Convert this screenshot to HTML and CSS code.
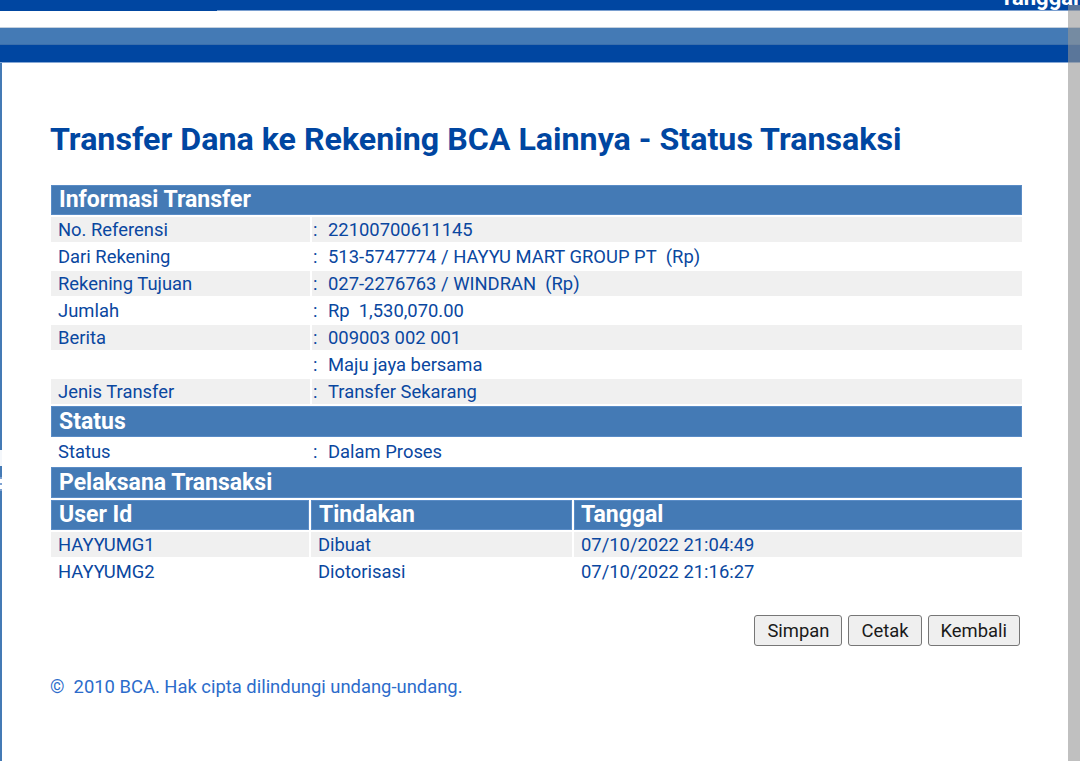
FILE: index.html
```html
<!DOCTYPE html>
<html lang="id">
<head>
<meta charset="utf-8">
<title>Transfer Dana ke Rekening BCA Lainnya - Status Transaksi</title>
<link rel="stylesheet" href="styles.css">
</head>
<body>
<div class="top">
  <div class="top-dark"><span class="top-text">Tanggal</span></div>
  <div class="top-line"><span class="top-line-left"></span><span class="top-line-right"></span></div>
  <div class="top-white"></div>
  <div class="top-sep"></div>
  <div class="top-mid"></div>
  <div class="top-navy"></div>
  <div class="top-edge"></div>
</div>
<div class="frame">
  <div class="edge">
    <div class="seg seg-a"></div>
    <div class="seg seg-gap"></div>
    <div class="seg seg-b"></div>
    <div class="seg seg-marks"><i></i><i></i><i></i></div>
    <div class="seg seg-c"></div>
  </div>
  <div class="main">
    <h1 class="title">Transfer Dana ke Rekening BCA Lainnya - Status Transaksi</h1>
    <div class="panel">
      <div class="hdr h30">Informasi Transfer</div>
      <div class="row gray"><div class="lab">No. Referensi</div><div class="val"><span class="colon">:</span>22100700611145</div></div>
      <div class="row"><div class="lab">Dari Rekening</div><div class="val"><span class="colon">:</span>513-5747774 / HAYYU MART GROUP PT&nbsp; (Rp)</div></div>
      <div class="row gray"><div class="lab">Rekening Tujuan</div><div class="val"><span class="colon">:</span>027-2276763 / WINDRAN&nbsp; (Rp)</div></div>
      <div class="row"><div class="lab">Jumlah</div><div class="val"><span class="colon">:</span>Rp&nbsp; 1,530,070.00</div></div>
      <div class="row gray"><div class="lab">Berita</div><div class="val"><span class="colon">:</span>009003 002 001</div></div>
      <div class="row"><div class="lab"></div><div class="val"><span class="colon">:</span>Maju jaya bersama</div></div>
      <div class="row gray"><div class="lab">Jenis Transfer</div><div class="val"><span class="colon">:</span>Transfer Sekarang</div></div>
      <div class="hdr h31">Status</div>
      <div class="row"><div class="lab">Status</div><div class="val"><span class="colon">:</span>Dalam Proses</div></div>
      <div class="hdr h31 mt1">Pelaksana Transaksi</div>
      <div class="urow uhead"><div class="c1">User Id</div><div class="c2">Tindakan</div><div class="c3">Tanggal</div></div>
      <div class="urow gray"><div class="c1">HAYYUMG1</div><div class="c2">Dibuat</div><div class="c3">07/10/2022 21:04:49</div></div>
      <div class="urow"><div class="c1">HAYYUMG2</div><div class="c2">Diotorisasi</div><div class="c3">07/10/2022 21:16:27</div></div>
    </div>
    <div class="actions">
      <button class="btn" type="button">Simpan</button>
      <button class="btn" type="button">Cetak</button>
      <button class="btn" type="button">Kembali</button>
    </div>
    <p class="footer">&copy;&nbsp; 2010 BCA. Hak cipta dilindungi undang-undang.</p>
  </div>
</div>
<div class="scrollbar"></div>
</body>
</html>
```

FILE: styles.css
```css
html, body {
  margin: 0;
  padding: 0;
  background: #ffffff;
  height: 761px;
  overflow: hidden;
}
body {
  font-family: Roboto, "Liberation Sans", Arial, sans-serif;
  color: #0a47a0;
}

/* top bars */
.top { width: 100%; }
.top-dark {
  height: 10px;
  background: #0046a1;
  overflow: hidden;
}
.top-text {
  display: block;
  margin-top: -13px;
  padding-left: 1000px;
  line-height: 22px;
  font-size: 22px;
  font-weight: 700;
  color: #ffffff;
  white-space: nowrap;
}
.top-line { display: flex; height: 1px; }
.top-line-left { width: 217px; background: #0046a1; }
.top-line-right { flex: 1; background: #7a9fd0; }
.top-white { height: 16px; background: #ffffff; }
.top-sep { height: 1px; background: #c3d0de; }
.top-mid { height: 16px; background: #447ab5; border-bottom: 1px solid #3b6fac; }
.top-navy { height: 17px; background: #0046a1; }
.top-edge { height: 1px; background: #86a8d6; }

/* frame */
.frame { display: flex; }
.edge {
  width: 2px;
  display: flex;
  flex-direction: column;
  height: 698px;
}
.seg-a { height: 387px; background: #447ab5; }
.seg-gap { height: 16px; background: #f4f7fb; }
.seg-b { height: 11px; background: #447ab5; }
.seg-marks {
  height: 14px;
  display: flex;
  flex-direction: column;
  justify-content: space-between;
  background: #ffffff;
}
.seg-marks i { display: block; height: 2px; background: #7ea2d2; }
.seg-c { flex: 1; background: #447ab5; }

.main { flex: 1; }

.title {
  margin: 57px 0 0 48px;
  font-size: 32.2px;
  line-height: 38px;
  font-weight: 700;
  color: #0046a1;
  white-space: nowrap;
}

.panel {
  margin: 27px 0 0 49px;
  width: 971px;
  display: flex;
  flex-direction: column;
  gap: 2px;
}
.hdr {
  background: #447ab5;
  box-shadow: inset 0 0 0 1px #5a8cc6;
  color: #ffffff;
  font-weight: 700;
  font-size: 23px;
  padding-left: 8px;
  white-space: nowrap;
}
.h30 { height: 30px; line-height: 30px; }
.h31 { height: 31px; line-height: 31px; }
.mt1 { margin-top: 1px; }

.row {
  display: grid;
  grid-template-columns: 259px 1fr;
  column-gap: 2px;
  height: 25px;
  line-height: 25px;
  font-size: 18.4px;
  white-space: nowrap;
}
.row .lab { padding-left: 7px; }
.row .val { padding-left: 1px; }
.row.gray .lab, .row.gray .val { background: #f0f0f0; }
.colon { display: inline-block; width: 15px; }

.urow {
  display: grid;
  grid-template-columns: 258px 261px 1fr;
  column-gap: 2px;
  height: 25px;
  line-height: 25px;
  font-size: 18.4px;
  white-space: nowrap;
}
.urow > div { padding-left: 7px; }
.urow.gray > div { background: #f0f0f0; }
.urow.uhead { height: 30px; line-height: 30px; }
.urow.uhead > div {
  background: #447ab5;
  box-shadow: inset 0 0 0 1px #5a8cc6;
  color: #ffffff;
  font-weight: 700;
  font-size: 23px;
  padding-left: 8px;
}
.urow.uhead > .c3 { padding-left: 7px; }

.actions {
  width: 969px;
  margin: 31px 0 0 49px;
  display: flex;
  justify-content: flex-end;
  gap: 6px;
}
.btn {
  height: 31px;
  padding: 0 12px;
  margin: 0;
  border: 1px solid #767676;
  border-radius: 3px;
  background: #efefef;
  color: #1a1a1a;
  font-family: Roboto, "Liberation Sans", Arial, sans-serif;
  font-size: 18.4px;
  line-height: 29px;
}

.footer {
  margin: 30px 0 0 48px;
  font-size: 18.4px;
  line-height: 21px;
  color: #2c6ccb;
  white-space: nowrap;
}

.scrollbar {
  position: fixed;
  top: 5px;
  right: 0;
  width: 12px;
  bottom: 0;
  background: rgba(150, 150, 150, 0.6);
}
```
